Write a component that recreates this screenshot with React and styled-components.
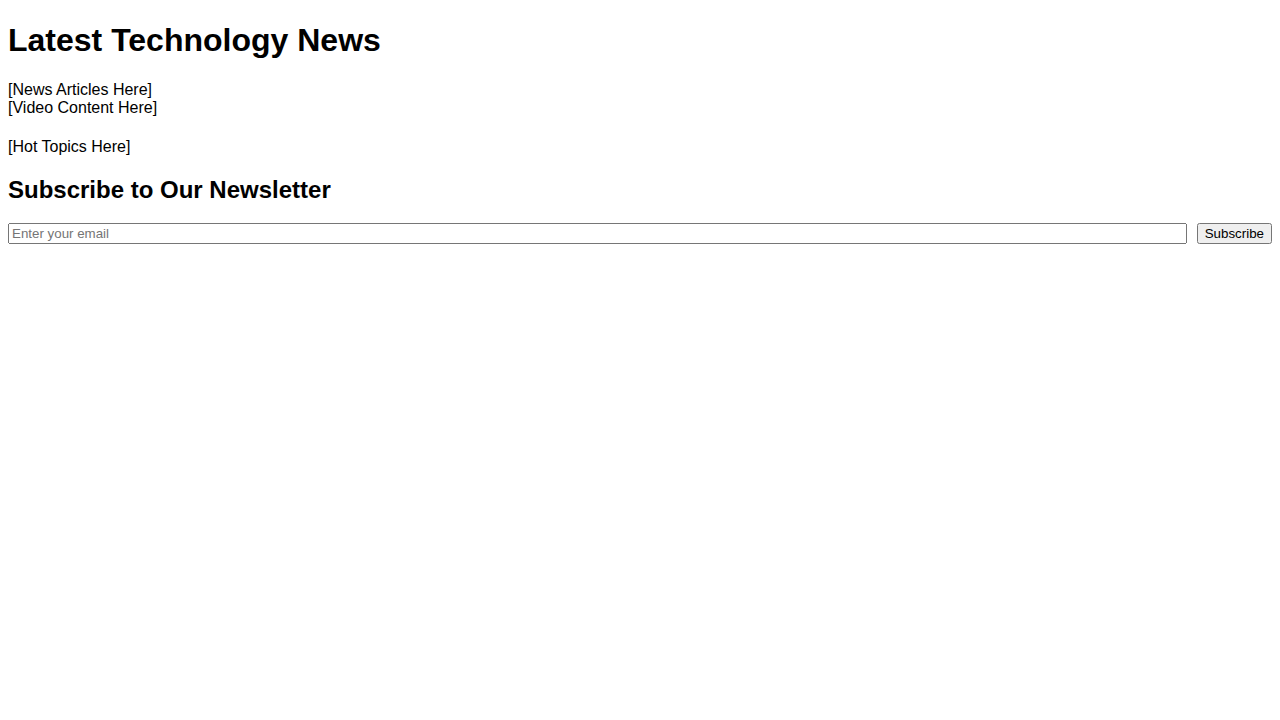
import React from "react";
import styled, { createGlobalStyle } from "styled-components";

const GlobalStyle = createGlobalStyle`
  body {
    margin: 0 8px 8px;
    font-family: "Liberation Sans", Arial, sans-serif;
    color: #000;
    background: #fff;
  }
`;

const Styled = {
  Page: styled.div`
    display: block;
  `,
  Title: styled.h1`
    font-size: 32px;
    font-weight: bold;
    line-height: 35px;
    margin: 22.5px 0 23px;
  `,
  Block: styled.div`
    font-size: 16px;
    line-height: normal;
  `,
  Topics: styled.div`
    font-size: 16px;
    margin: 21.5px 0 16px;
  `,
  Heading: styled.h2`
    font-size: 24px;
    font-weight: bold;
    margin: 19.92px 0 19px;
  `,
  Form: styled.form`
    display: flex;
    align-items: center;
    gap: 10px;
  `,
  Email: styled.input`
    flex: 1;
    font-family: "Liberation Sans", Arial, sans-serif;
  `,
  Button: styled.button`
    font-family: "Liberation Sans", Arial, sans-serif;
  `,
};

const App = () => {
  return (
    <Styled.Page>
      <GlobalStyle />
      <Styled.Title>Latest Technology News</Styled.Title>
      <Styled.Block>[News Articles Here]</Styled.Block>
      <Styled.Block>[Video Content Here]</Styled.Block>
      <Styled.Topics>[Hot Topics Here]</Styled.Topics>
      <Styled.Heading>Subscribe to Our Newsletter</Styled.Heading>
      <Styled.Form onSubmit={(e) => e.preventDefault()}>
        <Styled.Email type="email" placeholder="Enter your email" />
        <Styled.Button type="submit">Subscribe</Styled.Button>
      </Styled.Form>
    </Styled.Page>
  );
};

export default App;
